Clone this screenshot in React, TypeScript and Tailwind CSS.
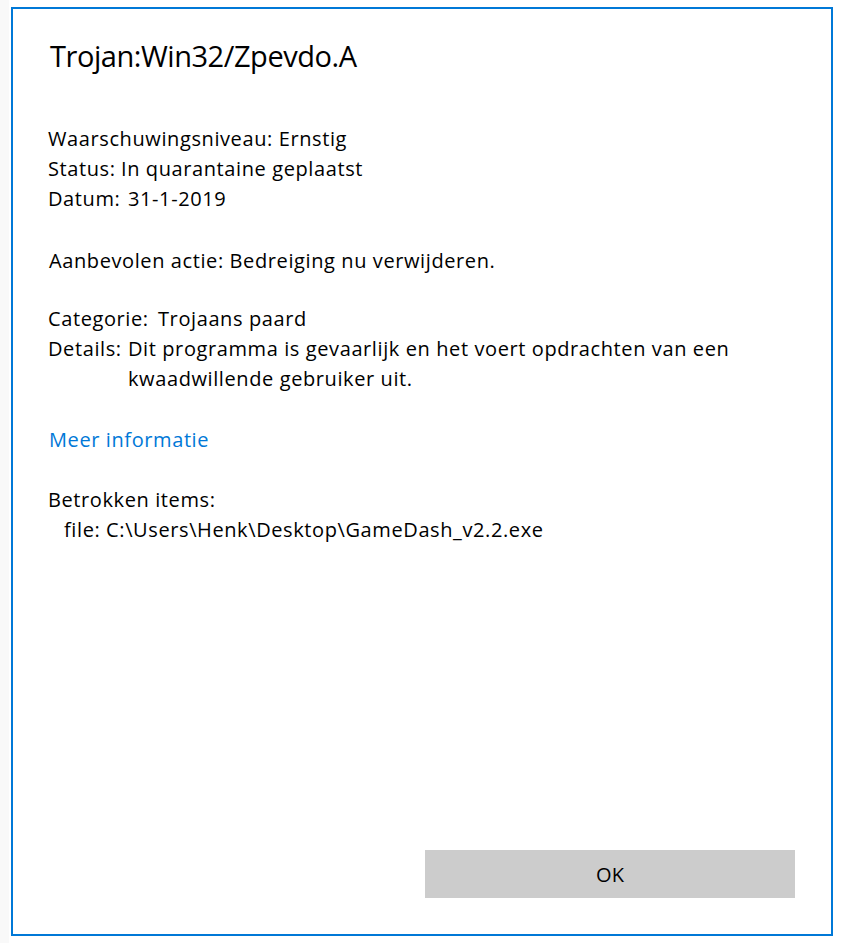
import React from "react";

export default function App() {
  return (
    <div
      className="w-[841px] h-[943px] bg-white relative flex"
      style={{ fontFamily: '"Open Sans", "Noto Sans", sans-serif' }}
    >
      <div className="w-[9px] h-full bg-[#f9f9f9] shrink-0" />
      <div className="pl-[2px] pt-[7px]">
        <div className="w-[822px] h-[929px] border-2 border-[#0078d7] bg-white flex flex-col text-black">
          <div className="pl-[37px] pt-[27px] text-[29px] leading-[40px] tracking-[-0.45px]">
            Trojan:Win32/Zpevdo.A
          </div>
          <div className="pl-[35px] pt-[48px] text-[20px] leading-[30px] tracking-[0.6px]">
            <div>Waarschuwingsniveau: Ernstig</div>
            <div className="flex">
              <div className="w-[73px] shrink-0">Status:</div>
              <div>In quarantaine geplaatst</div>
            </div>
            <div className="flex">
              <div className="w-[80px] shrink-0">Datum:</div>
              <div>31-1-2019</div>
            </div>
            <div className="h-[30px]" />
            <div className="pl-[1px] pt-[2px]">Aanbevolen actie: Bedreiging nu verwijderen.</div>
            <div className="h-[28px]" />
            <div className="flex">
              <div className="w-[110px] shrink-0">Categorie:</div>
              <div>Trojaans paard</div>
            </div>
            <div className="flex">
              <div className="w-[80px] shrink-0">Details:</div>
              <div>
                Dit programma is gevaarlijk en het voert opdrachten van een
                <br />
                kwaadwillende gebruiker uit.
              </div>
            </div>
            <div className="h-[30px]" />
            <div className="pl-[1px] pt-[1px] text-[#0078d7]">Meer informatie</div>
            <div className="h-[29px]" />
            <div className="pt-[1px]">Betrokken items:</div>
            <div className="pl-[16px]">file: C:\Users\Henk\Desktop\GameDash_v2.2.exe</div>
          </div>
          <div className="flex-1" />
          <div className="flex justify-end pr-[36px] pb-[36px]">
            <button className="w-[370px] h-[48px] bg-[#cccccc] text-[20px] text-black pt-[2px]">
              OK
            </button>
          </div>
        </div>
      </div>
    </div>
  );
}
